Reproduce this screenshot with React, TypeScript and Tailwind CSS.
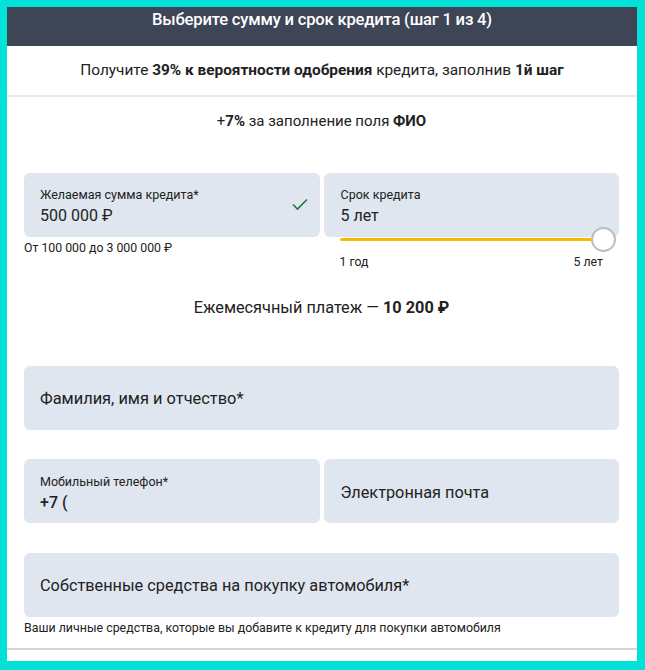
import React from "react";

export default function App() {
  return (
    <div
      className="min-h-[670px] bg-[#02e1d6] pt-[7px] pl-[7px] pr-[8px] pb-[9px]"
      style={{ fontFamily: "Roboto, 'Noto Sans', sans-serif" }}
    >
      <div className="bg-white flex flex-col text-[#222]">
        <div className="h-[39px] bg-[#3d4556] flex justify-center pt-[3px] text-white text-[16.6px] leading-[20px] font-medium tracking-[-0.2px]">
          Выберите сумму и срок кредита (шаг 1 из 4)
        </div>
        <div className="h-[49px] flex items-center justify-center text-[15.4px]">
          <span>
            Получите <b className="font-bold">39% к вероятности одобрения</b> кредита, заполнив{" "}
            <b className="font-bold">1й шаг</b>
          </span>
        </div>
        <div className="h-[2px] bg-[#e9e9e9]" />
        <div className="pl-[17px] pr-[18px] flex flex-col">
          <div className="mt-[14px] h-[20px] leading-[20px] text-center text-[15px]">
            +<b className="font-bold">7%</b> за заполнение поля <b className="font-bold">ФИО</b>
          </div>
          <div className="mt-[42px] grid grid-cols-2 gap-[4px] h-[95px]">
            <div className="flex flex-col">
              <div className="relative h-[64px] rounded-[6px] bg-[#dfe6ef] pl-[16px] pt-[14px]">
                <div className="text-[12.5px] leading-[16px]">Желаемая сумма кредита*</div>
                <div className="mt-[3px] text-[16px] leading-[20px]">500 000 ₽</div>
                <svg
                  className="absolute right-[12px] top-[25px]"
                  width="16"
                  height="13"
                  viewBox="0 0 16 13"
                  fill="none"
                >
                  <path d="M1 6.5 L5.5 11 L15 1.5" stroke="#1f7a35" strokeWidth="1.6" />
                </svg>
              </div>
              <div className="mt-[4px] text-[12.3px] leading-[14px]">От 100 000 до 3 000 000 ₽</div>
            </div>
            <div className="flex flex-col">
              <div className="h-[64px] rounded-[6px] bg-[#dfe6ef] pl-[17px] pt-[14px]">
                <div className="text-[12.5px] leading-[16px]">Срок кредита</div>
                <div className="mt-[3px] text-[16px] leading-[20px]">5 лет</div>
              </div>
              <div className="relative mx-[16px] mt-[1px] h-[3px] rounded-full bg-[#fbb700]">
                <div className="absolute right-[-13px] top-[-11px] h-[25px] w-[25px] rounded-full border-2 border-[#bdbdbd] bg-white" />
              </div>
              <div className="mx-[16px] mt-[14px] flex justify-between text-[12.3px] leading-[14px]">
                <span>1 год</span>
                <span>5 лет</span>
              </div>
            </div>
          </div>
          <div className="mt-[30px] h-[20px] leading-[20px] text-center text-[16.3px]">
            Ежемесячный платеж — <b className="font-bold">10 200 ₽</b>
          </div>
          <div className="mt-[48px] h-[64px] rounded-[6px] bg-[#dfe6ef] pl-[16px] pt-[3px] flex items-center text-[16.4px]">
            Фамилия, имя и отчество*
          </div>
          <div className="mt-[29px] grid grid-cols-2 gap-[4px]">
            <div className="h-[64px] rounded-[6px] bg-[#dfe6ef] pl-[16px] pt-[15px]">
              <div className="text-[12.5px] leading-[16px]">Мобильный телефон*</div>
              <div className="mt-[3px] text-[16px] leading-[20px] font-medium">+7 (</div>
            </div>
            <div className="h-[64px] rounded-[6px] bg-[#dfe6ef] pl-[17px] pt-[4px] flex items-center text-[16.3px]">
              Электронная почта
            </div>
          </div>
          <div className="mt-[30px] h-[64px] rounded-[6px] bg-[#dfe6ef] pl-[16px] pt-[2px] flex items-center text-[16.3px]">
            Собственные средства на покупку автомобиля*
          </div>
          <div className="mt-[4px] text-[12.4px] leading-[14px]">
            Ваши личные средства, которые вы добавите к кредиту для покупки автомобиля
          </div>
        </div>
        <div className="mt-[13px] h-[2px] bg-[#d6d6d6]" />
        <div className="h-[11px] bg-white" />
      </div>
    </div>
  );
}
